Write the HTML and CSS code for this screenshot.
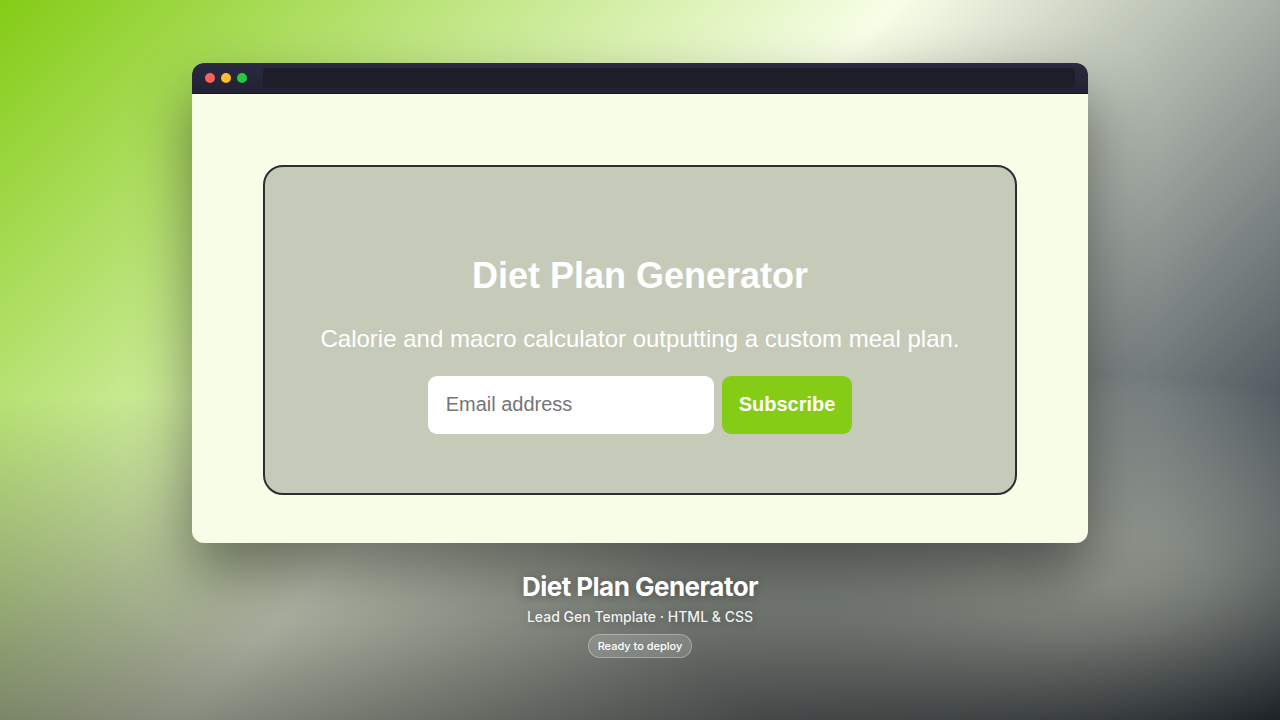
FILE: index.html
```
<!DOCTYPE html>
<html lang="en">
<head>
    <meta charset="UTF-8">
    <meta name="viewport" content="width=device-width, initial-scale=1.0">
    <title>Diet Plan Generator</title>
    <link rel="stylesheet" href="styles.css">
</head>
<body>
    <div class="browser">
        <div class="browser-bar">
            <span class="dot red"></span>
            <span class="dot yellow"></span>
            <span class="dot green"></span>
            <div class="address"></div>
        </div>
        <main class="page">
            <section class="card">
                <h1>Diet Plan Generator</h1>
                <p>Calorie and macro calculator outputting a custom meal plan.</p>
                <form class="subscribe">
                    <input type="email" class="email-input" placeholder="Email address" aria-label="Email address">
                    <button type="submit" class="subscribe-btn">Subscribe</button>
                </form>
            </section>
        </main>
    </div>

    <div class="caption">
        <h2>Diet Plan Generator</h2>
        <p>Lead Gen Template · HTML &amp; CSS</p>
        <span class="badge">Ready to deploy</span>
    </div>
</body>
</html>
```
FILE: styles.css
```
* {
    margin: 0;
    padding: 0;
    box-sizing: border-box;
}

body {
    min-height: 100vh;
    display: flex;
    flex-direction: column;
    justify-content: center;
    align-items: center;
    gap: 28px;
    font-family: Inter, sans-serif;
    background:
        linear-gradient(180deg, rgba(0, 0, 0, 0) 55%, rgba(0, 0, 0, 0.45) 100%),
        radial-gradient(ellipse 34% 29% at 86% 81%, rgba(247, 254, 231, 0.64), rgba(247, 254, 231, 0.54) 25%, rgba(247, 254, 231, 0)),
        linear-gradient(135deg, #84cc16 0%, #f7fee7 45%, #0f172a 100%);
}

.browser {
    width: 70%;
    border-radius: 12px;
    overflow: hidden;
    background: #f7fee7;
    box-shadow: 0 30px 60px rgba(0, 0, 0, 0.45);
}

.browser-bar {
    display: flex;
    align-items: center;
    gap: 6px;
    height: 31px;
    padding: 0 13px;
    background: linear-gradient(180deg, #2a2a40, #222233);
    border-bottom: 1px solid #151525;
}

.dot {
    width: 10px;
    height: 10px;
    border-radius: 50%;
}

.red {
    background: #ff5f57;
}

.yellow {
    background: #febc2e;
}

.green {
    background: #28c840;
}

.address {
    flex: 1;
    height: 20px;
    margin-left: 10px;
    border-radius: 4px;
    background: #1e1e2a;
}

.page {
    padding: 71px 71px 48px;
    font-family: "Liberation Sans", Arial, sans-serif;
}

.card {
    padding: 88px 40px 59px;
    border: 2px solid #2b2f33;
    border-radius: 20px;
    background: #c6cab9;
    color: white;
    text-align: center;
}

.card h1 {
    margin-bottom: 28px;
    font-size: 36px;
    line-height: 42px;
}

.card p {
    margin-bottom: 23px;
    font-size: 24px;
    line-height: 28px;
}

.subscribe {
    display: flex;
    justify-content: center;
    gap: 8px;
}

.email-input {
    width: 286px;
    height: 58px;
    padding: 0 18px;
    border: none;
    border-radius: 9px;
    background: white;
    font-family: inherit;
    font-size: 20px;
}

.email-input::placeholder {
    color: #757575;
}

.subscribe-btn {
    height: 58px;
    padding: 0 17px;
    border: none;
    border-radius: 9px;
    background: #84cc16;
    color: white;
    font-family: inherit;
    font-size: 20px;
    font-weight: bold;
    cursor: pointer;
}

.caption {
    display: flex;
    flex-direction: column;
    align-items: center;
    color: white;
    text-align: center;
    text-shadow: 0 1px 8px rgba(0, 0, 0, 0.3);
}

.caption h2 {
    margin-bottom: 5px;
    font-size: 26px;
    line-height: 32px;
    letter-spacing: -0.02em;
}

.caption p {
    margin-bottom: 8px;
    font-size: 14px;
    line-height: 18px;
    font-weight: 500;
    color: rgba(255, 255, 255, 0.92);
}

.badge {
    padding: 4px 9px;
    border: 1px solid rgba(255, 255, 255, 0.3);
    border-radius: 12px;
    background: rgba(255, 255, 255, 0.16);
    font-size: 11px;
    line-height: 14px;
    font-weight: 500;
    text-shadow: none;
}
```
